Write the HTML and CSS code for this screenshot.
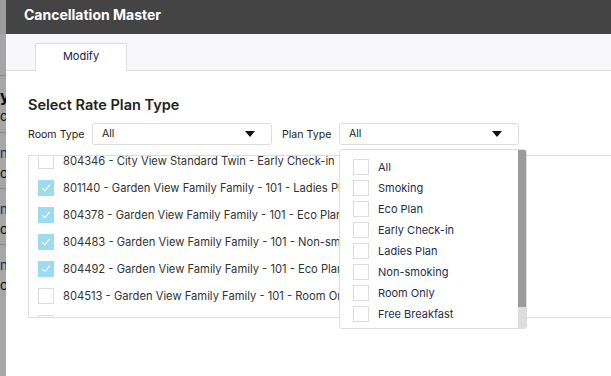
FILE: index.html
```html
<!DOCTYPE html>
<html lang="en">
<head>
    <meta charset="UTF-8">
    <meta name="viewport" content="width=device-width, initial-scale=1.0">
    <title>Cancellation Master</title>
    <link rel="stylesheet" href="styles.css">
</head>
<body>
    <div class="page">
        <div class="page-top"></div>
        <div class="page-sub"></div>
        <div class="page-row"><b>y</b><span>c</span></div>
        <div class="page-row line"><span class="dot">n</span><span>or</span></div>
        <div class="page-row line"><span class="dot">n</span><span>or</span></div>
        <div class="page-row line"><span class="dot">n</span><span>or</span></div>
    </div>
    <div class="overlay"></div>

    <div class="modal">
        <div class="modal-header">Cancellation Master</div>
        <div class="tabs">
            <div class="tab active">Modify</div>
        </div>

        <div class="modal-body">
            <h2>Select Rate Plan Type</h2>

            <div class="filters">
                <label class="room-label">Room Type</label>
                <div class="select">All<span class="caret"></span></div>
                <label class="plan-label">Plan Type</label>
                <div class="select-wrap">
                    <div class="select">All<span class="caret"></span></div>
                    <div class="dropdown">
                        <div class="options">
                            <div class="option"><span class="box"></span>All</div>
                            <div class="option"><span class="box"></span>Smoking</div>
                            <div class="option"><span class="box"></span>Eco Plan</div>
                            <div class="option"><span class="box"></span>Early Check-in</div>
                            <div class="option"><span class="box"></span>Ladies Plan</div>
                            <div class="option"><span class="box"></span>Non-smoking</div>
                            <div class="option"><span class="box"></span>Room Only</div>
                            <div class="option"><span class="box"></span>Free Breakfast</div>
                        </div>
                        <div class="scrollbar"><div class="thumb"></div></div>
                    </div>
                </div>
            </div>

            <div class="plan-list">
                <div class="plan-rows">
                    <div class="plan"><span class="box"></span>804346 - City View Standard Twin - Early Check-in</div>
                    <div class="plan"><span class="box checked"></span>801140 - Garden View Family Family - 101 - Ladies Plan</div>
                    <div class="plan"><span class="box checked"></span>804378 - Garden View Family Family - 101 - Eco Plan</div>
                    <div class="plan"><span class="box checked"></span>804483 - Garden View Family Family - 101 - Non-smoking</div>
                    <div class="plan"><span class="box checked"></span>804492 - Garden View Family Family - 101 - Eco Plan</div>
                    <div class="plan"><span class="box"></span>804513 - Garden View Family Family - 101 - Room Only</div>
                    <div class="plan"><span class="box"></span>804520 - Garden View Family Family - 101 - Free Breakfast</div>
                </div>
            </div>

            <h3>Cancellation Policy Preferences</h3>
        </div>
    </div>
</body>
</html>
```

FILE: styles.css
```css
body {
    margin: 0;
    font-family: Inter, "Noto Sans", sans-serif;
    background: #fff;
    overflow: hidden;
}

/* page behind the modal */
.page {
    width: 60px;
}

.page-top {
    height: 34px;
    background: #f0f0f0;
}

.page-sub {
    height: 41px;
    background: #fff;
    border-bottom: 1px solid #ccc;
}

.page-row {
    height: 56px;
    padding-top: 10px;
    font-size: 13px;
    color: #111;
    display: flex;
    flex-direction: column;
    line-height: 20px;
    box-sizing: border-box;
}

.page-row b {
    font-size: 16px;
}

.page-row.line {
    border-top: 1px solid #ccc;
}

.page-row .dot {
    color: #1b3b8a;
}

.overlay {
    position: fixed;
    inset: 0;
    background: rgba(0, 0, 0, 0.35);
}

/* modal */
.modal {
    position: fixed;
    left: 6px;
    top: 0;
    width: 640px;
    height: 100%;
    background: #fff;
}

.modal-header {
    height: 34px;
    background: #444;
    color: #fff;
    font-size: 14px;
    font-weight: 700;
    line-height: 30px;
    padding-left: 18px;
}

.tabs {
    height: 36px;
    background: #f8f7fa;
    border-bottom: 1px solid #ddd;
    display: flex;
    align-items: flex-end;
    padding-left: 29px;
}

.tab {
    width: 90px;
    height: 27px;
    background: #fff;
    border: 1px solid #ddd;
    border-bottom: none;
    border-radius: 2px 2px 0 0;
    margin-bottom: -1px;
    font-size: 11px;
    color: #1a2040;
    text-align: center;
    line-height: 25px;
}

.modal-body {
    padding-left: 22px;
}

.modal-body h2 {
    margin: 25px 0 0;
    font-size: 14.5px;
    font-weight: 600;
    color: #222;
    line-height: 18px;
}

.filters {
    display: flex;
    align-items: center;
    margin-top: 9px;
    font-size: 10.6px;
    color: #222;
}

.room-label {
    width: 64px;
}

.plan-label {
    width: 57px;
}

.filters > .select {
    margin-right: 10px;
}

.select {
    width: 169px;
    height: 20px;
    border: 1px solid #ddd;
    border-radius: 3px;
    padding-left: 9px;
    line-height: 20px;
    color: #222;
    position: relative;
}

.caret {
    position: absolute;
    right: 16px;
    top: 7px;
    border-left: 5px solid transparent;
    border-right: 5px solid transparent;
    border-top: 6px solid #111;
}

.select-wrap {
    position: relative;
}

.dropdown {
    position: absolute;
    left: 0;
    top: 26px;
    width: 186px;
    height: 178px;
    background: #fff;
    border: 1px solid #ddd;
    border-radius: 3px;
    z-index: 2;
    display: flex;
    overflow: hidden;
}

.options {
    flex: 1;
    padding-top: 6px;
}

.option {
    height: 21px;
    display: flex;
    align-items: center;
    padding-left: 13px;
    font-size: 11px;
    color: #1e2c4f;
}

.option .box {
    margin-right: 9px;
}

.scrollbar {
    width: 8px;
    background: #ddd;
}

.thumb {
    height: 157px;
    background: #9b9b9b;
}

.box {
    width: 14px;
    height: 14px;
    border: 1px solid #ddd;
    background: #fff;
    flex-shrink: 0;
    position: relative;
}

.box.checked {
    background: #9ddcf0;
    border-color: #9ddcf0;
}

.box.checked::after {
    content: "";
    position: absolute;
    left: 5px;
    top: 2px;
    width: 3px;
    height: 7px;
    border-right: 1px solid #fff;
    border-bottom: 1px solid #fff;
    transform: rotate(40deg);
}

.plan-list {
    margin-top: 10px;
    height: 161px;
    border: 1px solid #ddd;
    border-right: none;
    overflow: hidden;
}

.plan-rows {
    margin-top: -9px;
}

.plan {
    height: 27px;
    display: flex;
    align-items: center;
    padding-left: 9px;
    font-size: 11.2px;
    color: #333;
    white-space: nowrap;
}

.plan .box {
    margin-right: 9px;
}

.modal-body h3 {
    margin: 62px 0 0;
    font-size: 13px;
    font-weight: 600;
    color: #222;
}
```
